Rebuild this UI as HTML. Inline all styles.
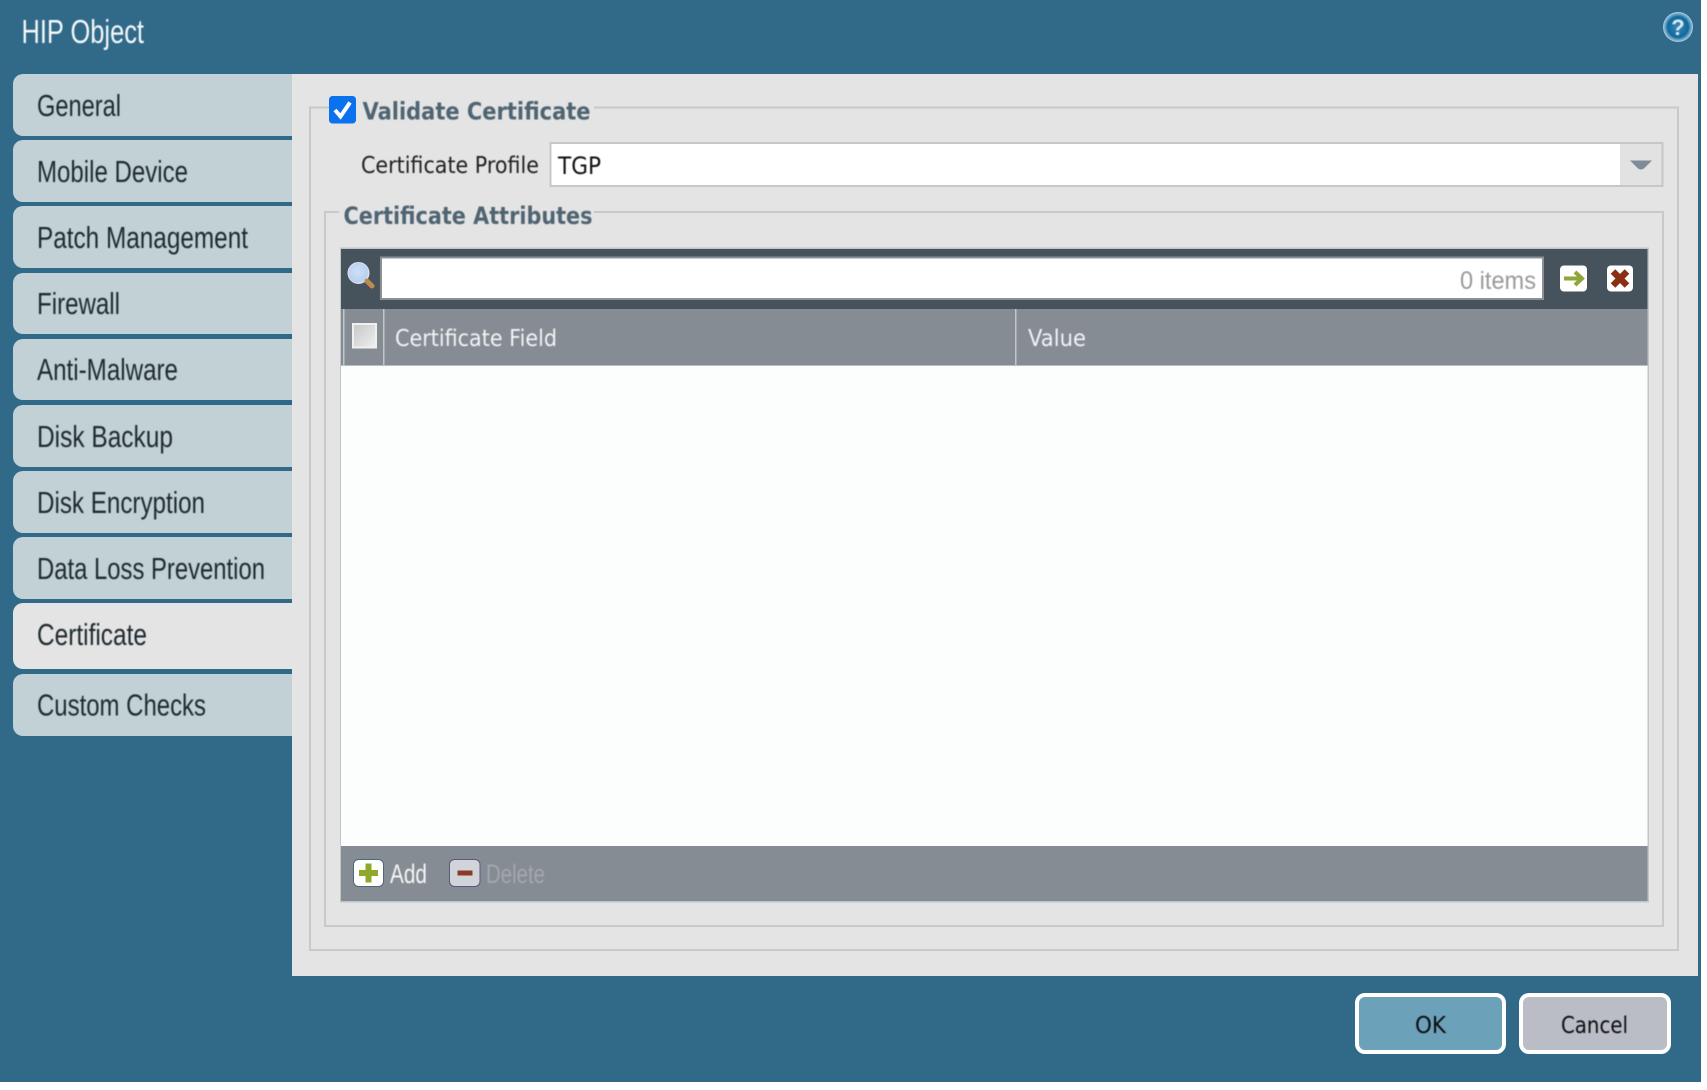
<!DOCTYPE html>
<html>
<head>
<meta charset="utf-8">
<title>HIP Object</title>
<style>
html,body{margin:0;padding:0;background:#fff;width:1707px;height:1090px;overflow:hidden}
svg{display:block;position:absolute;left:0;top:0}
.s{font-family:"Liberation Sans",sans-serif}
.d{font-family:"DejaVu Sans",sans-serif}
.t{font-family:"Liberation Sans",sans-serif;font-size:31px;fill:#1f2a30}
.soft{filter:blur(.4px)}
</style>
</head>
<body>
<svg width="1707" height="1090" viewBox="0 0 1707 1090" xmlns="http://www.w3.org/2000/svg">
<defs>
<radialGradient id="h" cx=".5" cy=".5" r=".55"><stop offset="0" stop-color="#3b88b8"/><stop offset=".62" stop-color="#0f6a9c"/><stop offset=".85" stop-color="#8fbcd6"/><stop offset="1" stop-color="#e4eff6"/></radialGradient>
<radialGradient id="m" cx=".45" cy=".45" r=".6"><stop offset="0" stop-color="#cfe0f5"/><stop offset=".8" stop-color="#b9d0ef"/><stop offset="1" stop-color="#e8f0fa"/></radialGradient>
<linearGradient id="cb" x1="0" y1="0" x2="1" y2="1"><stop offset="0" stop-color="#c4c9c6"/><stop offset="1" stop-color="#eeeeee"/></linearGradient>
</defs>
<rect x="0" y="0" width="1701" height="1082" fill="#306a88"/>
<rect x="292" y="74" width="1406" height="902" fill="#e4e4e4"/>

<!-- Tabs -->
<g fill="#c1d1d5">
<path d="M292 74H23a10 10 0 0 0-10 10V126a10 10 0 0 0 10 10H292Z"/>
<path d="M292 140H23a10 10 0 0 0-10 10V192a10 10 0 0 0 10 10H292Z"/>
<path d="M292 206H23a10 10 0 0 0-10 10V258a10 10 0 0 0 10 10H292Z"/>
<path d="M292 273H23a10 10 0 0 0-10 10V324a10 10 0 0 0 10 10H292Z"/>
<path d="M292 339H23a10 10 0 0 0-10 10V390a10 10 0 0 0 10 10H292Z"/>
<path d="M292 405H23a10 10 0 0 0-10 10V457a10 10 0 0 0 10 10H292Z"/>
<path d="M292 471H23a10 10 0 0 0-10 10V523a10 10 0 0 0 10 10H292Z"/>
<path d="M292 537H23a10 10 0 0 0-10 10V589a10 10 0 0 0 10 10H292Z"/>
<path d="M292 674H23a10 10 0 0 0-10 10V726a10 10 0 0 0 10 10H292Z"/>
</g>
<path d="M292 603H23a10 10 0 0 0-10 10V659a10 10 0 0 0 10 10H292Z" fill="#e4e4e4"/>

<g class="soft">
<text class="s" x="21.500" y="43" font-size="33" fill="#f4f8fa" textLength="122.500" lengthAdjust="spacingAndGlyphs">HIP Object</text>
<text class="t" x="37" y="116" textLength="84" lengthAdjust="spacingAndGlyphs">General</text>
<text class="t" x="37" y="182" textLength="151" lengthAdjust="spacingAndGlyphs">Mobile Device</text>
<text class="t" x="37" y="248" textLength="211" lengthAdjust="spacingAndGlyphs">Patch Management</text>
<text class="t" x="37" y="314" textLength="83" lengthAdjust="spacingAndGlyphs">Firewall</text>
<text class="t" x="37" y="380" textLength="141" lengthAdjust="spacingAndGlyphs">Anti-Malware</text>
<text class="t" x="37" y="447" textLength="136" lengthAdjust="spacingAndGlyphs">Disk Backup</text>
<text class="t" x="37" y="513" textLength="168" lengthAdjust="spacingAndGlyphs">Disk Encryption</text>
<text class="t" x="37" y="579" textLength="228" lengthAdjust="spacingAndGlyphs">Data Loss Prevention</text>
<text class="t" x="37" y="645" textLength="110" lengthAdjust="spacingAndGlyphs">Certificate</text>
<text class="t" x="37" y="715.500" textLength="169" lengthAdjust="spacingAndGlyphs">Custom Checks</text>
</g>

<!-- Fieldset 1 -->
<path d="M330 107.500H310V950H1678V107.500H594" fill="none" stroke="#c9c9c9" stroke-width="2"/>
<!-- Checkbox -->
<rect x="329" y="96" width="27" height="27.500" rx="3.500" fill="#0b72ee"/>
<path d="M335 110l5.500 6.500L350 102.500" fill="none" stroke="#fff" stroke-width="4"/>
<g class="soft">
<text class="d" x="362.500" y="119.500" font-size="24" font-weight="700" fill="#4f6472" textLength="228" lengthAdjust="spacingAndGlyphs">Validate Certificate</text>
<text class="d" x="361" y="173" font-size="23.500" fill="#1d1f22" textLength="178" lengthAdjust="spacingAndGlyphs">Certificate Profile</text>
</g>
<!-- Input -->
<rect x="550.500" y="143" width="1112" height="43" fill="#fff" stroke="#c7c7c7" stroke-width="2"/>
<rect x="1620" y="144" width="41.500" height="41" fill="#e2e2e2"/>
<path d="M1630 160.500H1652L1644 168.500Q1641 170.500 1638 168.500Z" fill="#7f8b96"/>
<text class="d soft" x="558" y="174" font-size="24" fill="#111" textLength="43" lengthAdjust="spacingAndGlyphs">TGP</text>

<!-- Fieldset 2 -->
<path d="M339 212H325V926H1663V212H594" fill="none" stroke="#c9c9c9" stroke-width="2"/>
<text class="d soft" x="343.500" y="224" font-size="24" font-weight="700" fill="#4f6472" textLength="249" lengthAdjust="spacingAndGlyphs">Certificate Attributes</text>

<!-- Table -->
<rect x="340" y="247.500" width="1309" height="655" fill="#bcc6cb"/>
<rect x="341" y="249" width="1306.500" height="60" fill="#47535c"/>
<rect x="341" y="309" width="1306.500" height="56" fill="#858c93"/>
<rect x="341" y="365" width="1306.500" height="1" fill="#b9bec2"/>
<rect x="341" y="366" width="1306.500" height="480.500" fill="#fcfefd"/>
<rect x="341" y="846" width="1306.500" height="55" fill="#858c93"/>

<!-- Search -->
<circle cx="358.500" cy="273" r="10.500" fill="url(#m)" stroke="#d9e4f2"/>
<path d="M367 281l5 5" stroke="#c08a4a" stroke-width="5" stroke-linecap="round"/>
<rect x="381" y="257.500" width="1162" height="41.500" fill="#fff" stroke="#8a9096" stroke-width="2"/>
<text class="s soft" x="1460" y="289" font-size="25" fill="#999" textLength="76" lengthAdjust="spacingAndGlyphs">0 items</text>

<!-- Go -->
<rect x="1560" y="265.500" width="27" height="26" rx="4" fill="#fff"/>
<path d="M1564 278.500H1581M1575 272L1582 278.500L1575 285" fill="none" stroke="#8ea63a" stroke-width="4"/>
<!-- Clear -->
<rect x="1607" y="265.500" width="26" height="26" rx="4" fill="#fff"/>
<path d="M1613 271.500L1627 285.500M1627 271.500L1613 285.500" fill="none" stroke="#8a2f14" stroke-width="6.500"/>

<!-- Header -->
<rect x="343" y="309" width="1.500" height="56" fill="#c2c6c9"/>
<rect x="383" y="309" width="1.500" height="56" fill="#c2c6c9"/>
<rect x="1015" y="309" width="1.500" height="56" fill="#c2c6c9"/>
<rect x="353" y="324" width="23" height="23.500" fill="url(#cb)" stroke="#f0f0f0" stroke-width="2"/>
<g class="soft">
<text class="d" x="395" y="346" font-size="23.500" fill="#f2f4f5" textLength="162" lengthAdjust="spacingAndGlyphs">Certificate Field</text>
<text class="d" x="1028" y="346" font-size="23.500" fill="#f2f4f5" textLength="58" lengthAdjust="spacingAndGlyphs">Value</text>
</g>

<!-- Footer -->
<rect x="353.500" y="859.500" width="30" height="27" rx="5" fill="#fff" stroke="#4a6a78"/>
<path d="M368.500 863.500V882.500M359 873H378" stroke="#8ea82a" stroke-width="6"/>
<text class="s soft" x="390" y="883" font-size="27" fill="#f6f7f8" textLength="37" lengthAdjust="spacingAndGlyphs">Add</text>
<rect x="449.500" y="859.500" width="30.500" height="27" rx="5" fill="#d1d5d9" stroke="#5a5a80"/>
<path d="M457.500 873H472.500" stroke="#8a3a26" stroke-width="5"/>
<text class="s soft" x="486" y="883" font-size="27" fill="#a2a8ae" textLength="59" lengthAdjust="spacingAndGlyphs">Delete</text>

<!-- Help -->
<circle cx="1678" cy="27" r="15" fill="url(#h)"/>
<text class="s soft" x="1678" y="35" font-size="22" font-weight="700" fill="#dfeaf2" text-anchor="middle">?</text>

<!-- Buttons -->
<rect x="1357" y="995" width="147" height="57" rx="8" fill="#6ca1ba" stroke="#fff" stroke-width="4"/>
<rect x="1521" y="995" width="148" height="57" rx="8" fill="#babdc5" stroke="#fff" stroke-width="4"/>
<g class="soft">
<text class="d" x="1415" y="1033" font-size="23" fill="#0c0c0e" textLength="31" lengthAdjust="spacingAndGlyphs">OK</text>
<text class="d" x="1561" y="1033" font-size="23" fill="#0c0c0e" textLength="67" lengthAdjust="spacingAndGlyphs">Cancel</text>
</g>
</svg>
</body>
</html>
